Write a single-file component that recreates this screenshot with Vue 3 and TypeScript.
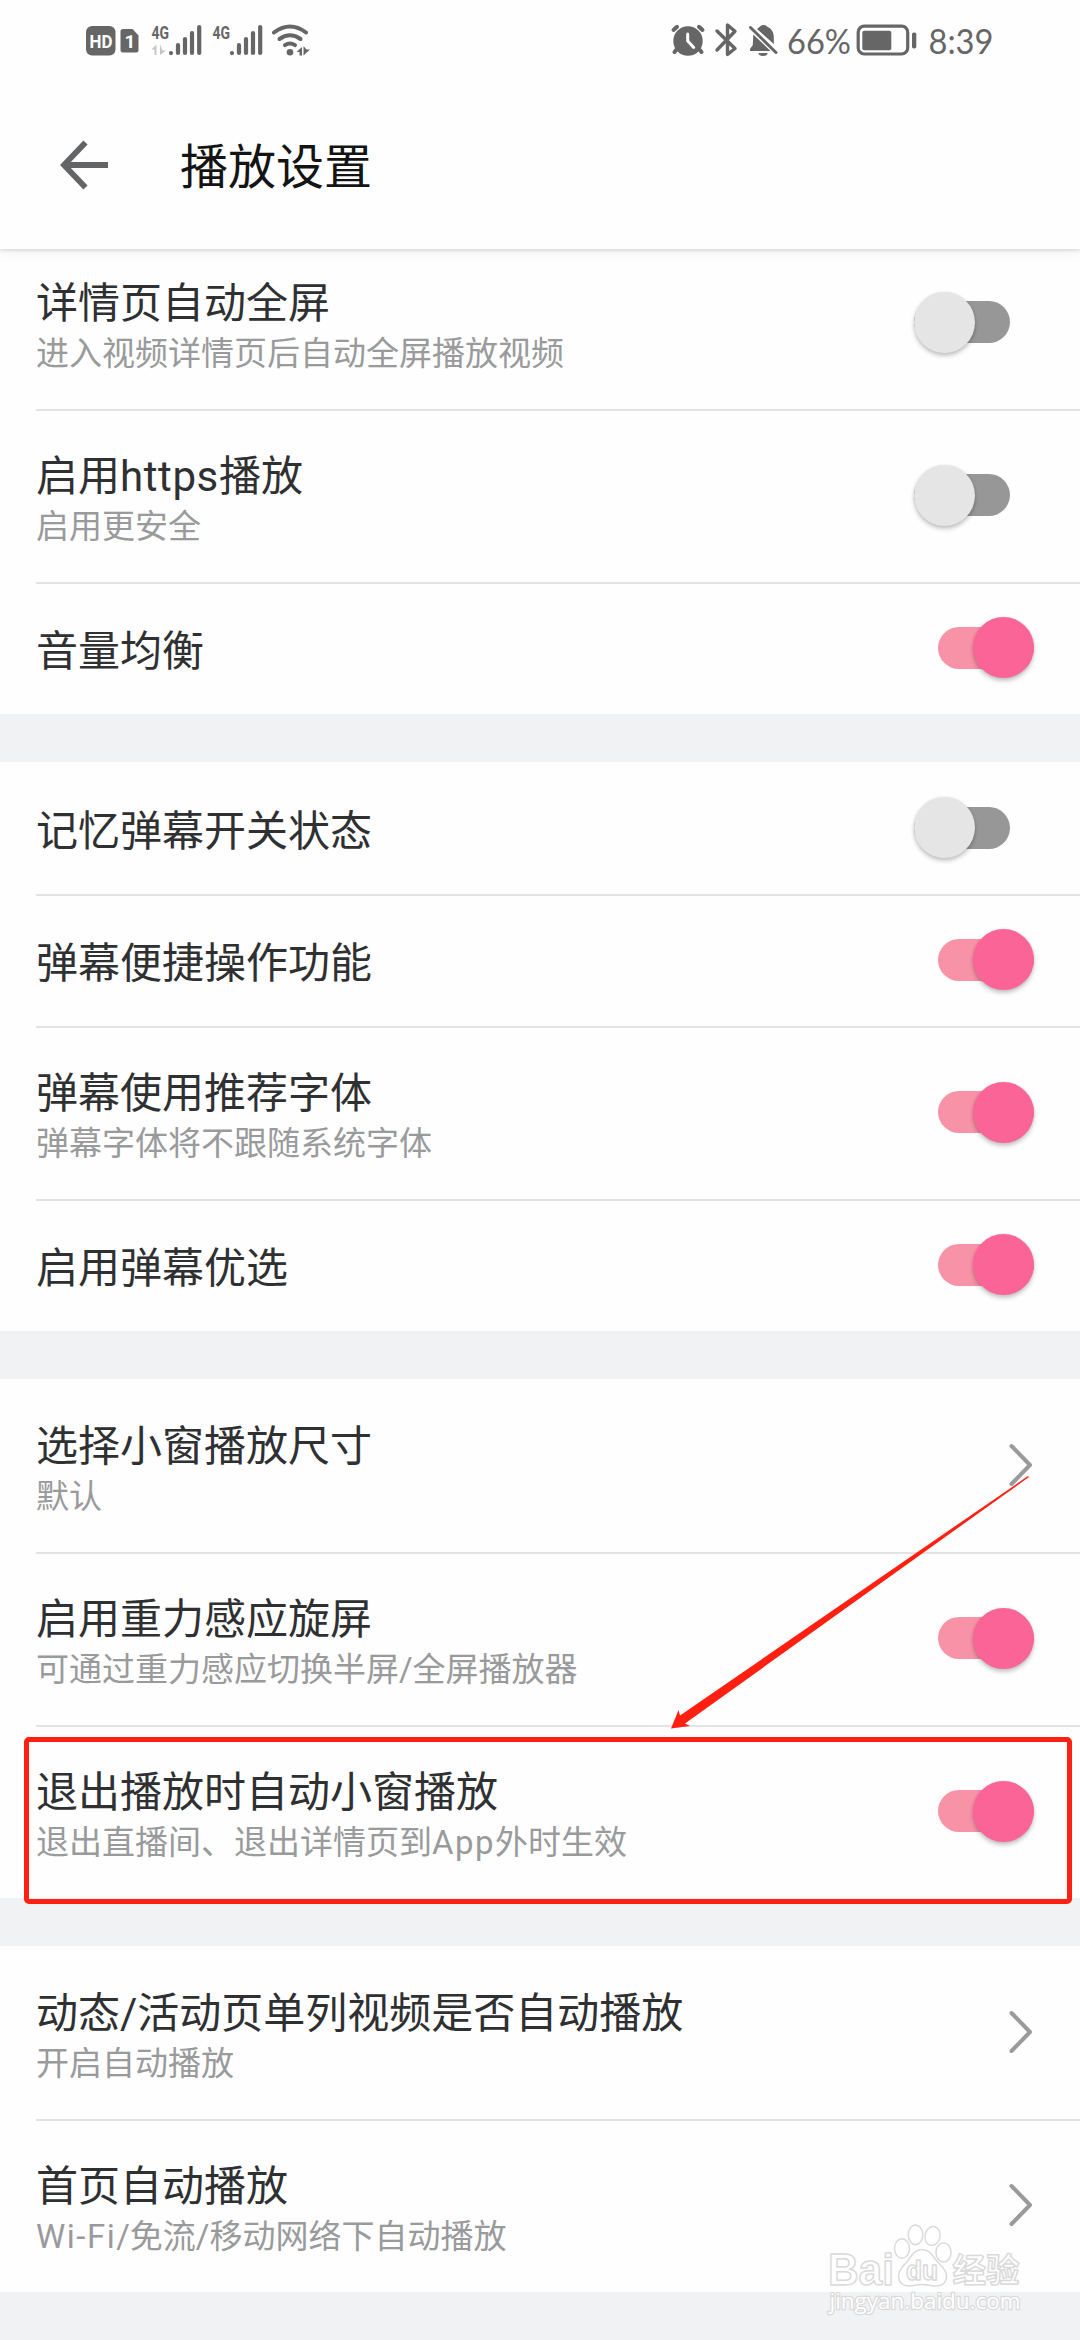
<script setup lang="ts">
type Kind = 'on' | 'off' | 'link'

interface Row {
  title: string
  note?: string
  kind: Kind
  marked?: boolean
}

const groups: Row[][] = [
  [
    { title: '详情页自动全屏', note: '进入视频详情页后自动全屏播放视频', kind: 'off' },
    { title: '启用https播放', note: '启用更安全', kind: 'off' },
    { title: '音量均衡', kind: 'on' },
  ],
  [
    { title: '记忆弹幕开关状态', kind: 'off' },
    { title: '弹幕便捷操作功能', kind: 'on' },
    { title: '弹幕使用推荐字体', note: '弹幕字体将不跟随系统字体', kind: 'on' },
    { title: '启用弹幕优选', kind: 'on' },
  ],
  [
    { title: '选择小窗播放尺寸', note: '默认', kind: 'link' },
    { title: '启用重力感应旋屏', note: '可通过重力感应切换半屏/全屏播放器', kind: 'on' },
    { title: '退出播放时自动小窗播放', note: '退出直播间、退出详情页到App外时生效', kind: 'on', marked: true },
  ],
  [
    { title: '动态/活动页单列视频是否自动播放', note: '开启自动播放', kind: 'link' },
    { title: '首页自动播放', note: 'Wi-Fi/免流/移动网络下自动播放', kind: 'link' },
  ],
]

// Latin words get their own spacing, so split them from the Chinese text.
function runs(text: string): { text: string; latin: boolean }[] {
  return text
    .split(/([A-Za-z-]+)/)
    .filter((part) => part.length > 0)
    .map((part) => ({ text: part, latin: /^[A-Za-z-]+$/.test(part) }))
}
</script>

<template>
  <div class="screen">
    <header class="header">
      <div class="status">
        <svg class="status-left" width="230" height="40" viewBox="84 20 230 40">
          <rect x="86" y="26" width="29.5" height="29.5" rx="6" fill="#666" />
          <text x="89.5" y="48" font-size="18" font-weight="700" fill="#fff" textLength="23" lengthAdjust="spacingAndGlyphs">HD</text>
          <path d="M123 29h9.5l6 6.500v14.500a2.500 2.500 0 0 1-2.500 2.500h-13a2.500 2.500 0 0 1-2.500-2.500V31.500a2.500 2.500 0 0 1 2.500-2.500z" fill="#666" />
          <text x="124.500" y="48" font-size="19" font-weight="700" fill="#fff">1</text>
          <g fill="#666">
            <text x="151.500" y="38.500" font-size="17.500" font-weight="700" textLength="17.500" lengthAdjust="spacingAndGlyphs">4G</text>
            <text x="212.500" y="38.500" font-size="17.500" font-weight="700" textLength="17.500" lengthAdjust="spacingAndGlyphs">4G</text>
          </g>
          <g stroke="#666" stroke-width="4.200" stroke-linecap="round">
            <path d="M171 53v.1M178 53v-7.800M185 53v-14M192 53v-20M199.200 53v-26" />
            <path d="M232 53v.1M239 53v-7.800M246 53v-14M253 53v-20M260.200 53v-26" />
          </g>
          <path d="M151.500 49.500l5-5v10.500h-2v-5.500zM160 44.500v10.500l6-4.500h-3.500z" fill="#c6c6c6" />
          <g fill="none" stroke="#666" stroke-width="4" stroke-linecap="round">
            <path d="M274 32.500Q290 20.500 306 32.500" />
            <path d="M279.500 39Q290 31.500 300.500 39" />
            <path d="M285 45.200Q290 41.800 295 45.200" />
          </g>
          <circle cx="290" cy="52.300" r="3.300" fill="#666" />
          <path d="M296.500 52l5.500-5v8.500h-2.500v-3.500zM303.500 46v9.500l6.500-6h-3.500z" fill="#666" />
        </svg>
        <svg class="status-right" width="330" height="40" viewBox="668 20 330 40">
          <g fill="none" stroke="#666" stroke-width="4" stroke-linecap="round">
            <path d="M673.500 30l3.500-3.200M702.500 30l-3.500-3.200M677 49l-2.500 3M699 49l2.500 3" />
          </g>
          <circle cx="688" cy="41" r="14.700" fill="#666" />
          <path d="M687.700 34v7l6 6.500" fill="none" stroke="#fff" stroke-width="3" stroke-linecap="round" stroke-linejoin="round" />
          <path d="M717 31l18 17.500-7.500 6V25l7.500 6.200L717 50" fill="none" stroke="#666" stroke-width="3.400" stroke-linecap="round" stroke-linejoin="round" />
          <path d="M763.300 25a4 4 0 0 1 4 1.800c4 1.500 6.500 5.500 6.500 10.200v7L757 29c1-.8 1.800-1.400 2.800-2.200a4 4 0 0 1 3.500-1.800zM753.300 34.500L770.500 51H750v-2l2.800-4z" fill="#666" />
          <path d="M758.500 53h9a4.500 3 0 0 1-9 0z" fill="#666" />
          <path d="M750.500 27.500l25.500 25" stroke="#666" stroke-width="3" stroke-linecap="round" />
          <text class="digits" x="787" y="53.500" font-size="34.500" textLength="64" lengthAdjust="spacingAndGlyphs">66%</text>
          <rect x="858.200" y="26.200" width="49.500" height="27.800" rx="6" fill="none" stroke="#666" stroke-width="3.200" />
          <rect x="862.300" y="30.700" width="29" height="19.500" rx="2" fill="#666" />
          <rect x="912" y="32.500" width="4.300" height="16" rx="1.800" fill="#666" />
          <text class="digits" x="928.500" y="53.500" font-size="34.500" textLength="65" lengthAdjust="spacingAndGlyphs">8:39</text>
        </svg>
      </div>
      <div class="bar">
        <svg class="back" width="48" height="50" viewBox="0 0 48 50">
          <path d="M25.500 2.500L4 25l21.500 22.500M4.500 25H48" fill="none" stroke="#626466" stroke-width="5.800" />
        </svg>
        <h1>播放设置</h1>
      </div>
    </header>

    <main class="list">
      <section v-for="(group, g) in groups" :key="g" class="group">
        <div v-for="row in group" :key="row.title" class="row" :class="{ tall: row.note }">
          <div class="text">
            <div class="title"><span v-for="(run, i) in runs(row.title)" :key="i" :class="{ latin: run.latin }">{{ run.text }}</span></div>
            <div v-if="row.note" class="note"><span v-for="(run, i) in runs(row.note)" :key="i" :class="{ latin: run.latin }">{{ run.text }}</span></div>
          </div>
          <svg v-if="row.kind === 'link'" class="chevron" width="24" height="44" viewBox="0 0 24 44">
            <path d="M2.500 3l18.500 19L2.500 41" fill="none" stroke="#999a9c" stroke-width="4" stroke-linecap="round" stroke-linejoin="round" />
          </svg>
          <div v-else class="switch" :class="row.kind"><span class="thumb"></span></div>
          <div v-if="row.marked" class="mark">
            <svg class="pointer" width="362" height="256" viewBox="669 1474 362 256">
              <path d="M1028 1476L680 1715.500l-1.500-5.500-7.500 18.500 19-2.500-5-2.500L1029 1477z" fill="#ff2012" />
            </svg>
          </div>
        </div>
      </section>
    </main>

    <svg class="watermark" width="210" height="100" viewBox="820 2220 210 100">
      <g fill="#fff" stroke="#dadada" stroke-width="1.500" stroke-linejoin="round">
        <text class="brand" x="828" y="2284.500" font-size="44" textLength="66" lengthAdjust="spacingAndGlyphs">Bai</text>
        <ellipse cx="902" cy="2248.500" rx="7.500" ry="9.700" />
        <ellipse cx="915.500" cy="2234.800" rx="7.300" ry="9.800" />
        <ellipse cx="932.500" cy="2236" rx="7.500" ry="9.500" transform="rotate(12 932.500 2236)" />
        <ellipse cx="943.500" cy="2252.500" rx="7.500" ry="9.500" />
        <path d="M922 2249.500c7 0 10 5 13.500 10 4 5.500 11 9 11 16.500 0 7-5 10-11 10-5 0-8-1.500-13.500-1.500s-8 1.500-13 1.500c-6 0-10.500-3.500-10.500-10 0-7 6-10.500 10-16 3.500-5 6.500-10.500 13.500-10.500z" />
        <text class="brand" x="906" y="2280" font-size="27" textLength="32" lengthAdjust="spacingAndGlyphs">du</text>
        <text class="cjk" x="952.500" y="2281.500" font-size="33.500">经验</text>
      </g>
      <text class="site" x="829.500" y="2309" font-size="22.500" textLength="191" lengthAdjust="spacingAndGlyphs">jingyan.baidu.com</text>
    </svg>
  </div>
</template>

<style>
body {
  margin: 0;
  background: #f1f2f4;
}
</style>

<style scoped>
.screen {
  position: relative;
  width: 1080px;
  height: 2340px;
  overflow: hidden;
  background: #f1f2f4;
  font-family: Roboto, 'Noto Sans CJK SC', sans-serif;
}
.header {
  position: relative;
  z-index: 1;
  height: 249px;
  background: #fefefe;
  box-shadow: 0 2px 3px rgba(0, 0, 0, 0.1), 0 6px 10px rgba(0, 0, 0, 0.04);
}
.status {
  display: flex;
  justify-content: space-between;
  padding: 20px 82px 22px 84px;
}
.status svg {
  font-family: Roboto, sans-serif;
}
.digits {
  font-family: Lato, sans-serif;
  fill: #666;
}
.bar {
  display: flex;
  align-items: center;
  height: 166px;
  padding-left: 60px;
}
h1 {
  margin: 0 0 0 72px;
  padding-top: 6px;
  font-size: 48px;
  font-weight: 400;
  line-height: 60px;
  color: #141414;
}
.list {
  display: flex;
  flex-direction: column;
  gap: 48px;
  margin-top: -13px;
}
.group {
  padding-top: 2px;
  background: #fefefe;
}
.row {
  position: relative;
  display: flex;
  align-items: center;
  justify-content: space-between;
  height: 130px;
  padding-left: 36px;
}
.row.tall {
  height: 171px;
}
.row + .row {
  margin-top: 2px;
}
.row + .row::before {
  content: '';
  position: absolute;
  top: -2px;
  left: 36px;
  right: 0;
  height: 2px;
  background: #e3e3e3;
}
.text {
  padding-top: 6px;
}
.tall .text {
  padding-top: 5px;
}
.title {
  font-size: 42px;
  line-height: 56px;
  color: #2f3032;
  white-space: nowrap;
}
.title .latin {
  letter-spacing: 0.6px;
}
.note {
  font-size: 33px;
  line-height: 44px;
  color: #999a9b;
  white-space: nowrap;
}
.note .latin {
  letter-spacing: 1.5px;
}
.switch {
  display: flex;
  align-items: center;
  width: 96px;
  height: 42px;
  margin-bottom: 3px;
  border-radius: 21px;
}
.switch.off {
  margin-right: 70px;
  background: #979797;
}
.switch.on {
  justify-content: flex-end;
  margin-right: 46px;
  background: #f792a7;
}
.thumb {
  flex: none;
  width: 61px;
  height: 61px;
  border-radius: 50%;
  background: #e5e5e5;
  box-shadow: 0 3px 4px rgba(0, 0, 0, 0.22), 0 0 3px rgba(0, 0, 0, 0.08);
}
.on .thumb {
  background: #fb6496;
}
.chevron {
  margin: 0 47px 3px 0;
}
.mark {
  position: absolute;
  top: 10px;
  left: 24px;
  width: 1038px;
  height: 157px;
  border: 5px solid #ff2012;
  border-radius: 5px;
}
.pointer {
  position: absolute;
  left: 640px;
  top: -268px;
}
.watermark {
  position: absolute;
  left: 820px;
  top: 2220px;
}
.brand {
  font-family: 'Liberation Sans', sans-serif;
  font-weight: 700;
}
.cjk {
  font-family: 'Noto Sans CJK SC', sans-serif;
  font-weight: 700;
}
.site {
  font-family: 'Open Sans', sans-serif;
  fill: #fff;
  stroke: #dadada;
  stroke-width: 2.5px;
  paint-order: stroke;
}
</style>
